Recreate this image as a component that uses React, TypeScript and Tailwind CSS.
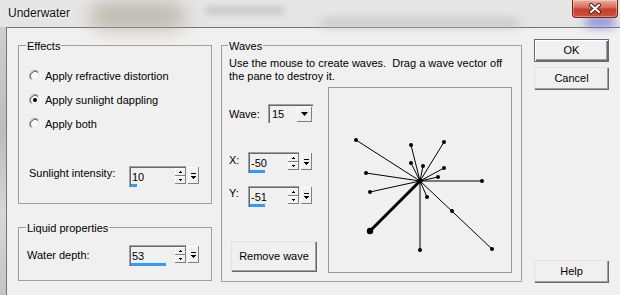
import React from "react";

const FONT = "font-['Liberation_Sans',Arial,sans-serif]";

function Radio({ checked, label }: { checked?: boolean; label: string }) {
  return (
    <div className="flex h-[24px] items-center gap-[4px]">
      <svg width="12" height="12" viewBox="0 0 12 12" className="shrink-0">
        <circle cx="6" cy="6" r="4" fill="#f7f7f7" />
        <path d="M2.11 9.89 A5.5 5.5 0 0 1 9.89 2.11" fill="none" stroke="#a0a0a0" strokeWidth="1" />
        <path d="M2.82 9.18 A4.5 4.5 0 0 1 9.18 2.82" fill="none" stroke="#696969" strokeWidth="1" />
        <path d="M9.89 2.11 A5.5 5.5 0 0 1 2.11 9.89" fill="none" stroke="#ffffff" strokeWidth="1" />
        <path d="M9.18 2.82 A4.5 4.5 0 0 1 2.82 9.18" fill="none" stroke="#e3e3e3" strokeWidth="1" />
        {checked && <circle cx="6" cy="6" r="2" fill="#000" />}
      </svg>
      <span className="text-[11px] leading-[14px] text-black whitespace-nowrap">{label}</span>
    </div>
  );
}

function SmallBtn({ children, cls }: { children: React.ReactNode; cls: string }) {
  return (
    <div
      className={`flex items-center justify-center bg-[#f0f0f0] shadow-[inset_-1px_-1px_0_#808080,inset_1px_1px_0_#ffffff] ${cls}`}
    >
      {children}
    </div>
  );
}

function UpTri() {
  return (
    <svg width="3" height="2" viewBox="0 0 3 2">
      <rect x="1" y="0" width="1" height="1" fill="#000" />
      <rect x="0" y="1" width="3" height="1" fill="#000" />
    </svg>
  );
}
function DownTri() {
  return (
    <svg width="3" height="2" viewBox="0 0 3 2">
      <rect x="0" y="0" width="3" height="1" fill="#000" />
      <rect x="1" y="1" width="1" height="1" fill="#000" />
    </svg>
  );
}
function BarDown() {
  return (
    <svg width="5" height="6" viewBox="0 0 5 6">
      <rect x="0" y="0" width="5" height="1" fill="#000" />
      <rect x="0" y="3" width="5" height="1" fill="#000" />
      <rect x="1" y="4" width="3" height="1" fill="#000" />
      <rect x="2" y="5" width="1" height="1" fill="#000" />
    </svg>
  );
}

function SpinEdit({ value, wCls, barCls }: { value: string; wCls: string; barCls: string }) {
  return (
    <div className="flex items-start">
      <div
        className={`relative flex h-[21px] items-start border-l border-t border-[#a0a0a0] shadow-[inset_1px_1px_0_#696969] ${wCls}`}
      >
        <span className="flex-1 pl-[2px] pt-[4px] text-[11px] leading-[13px] text-black">{value}</span>
        <div className="mt-[1px] flex flex-col">
          <SmallBtn cls="w-[11px] h-[8px]">
            <UpTri />
          </SmallBtn>
          <SmallBtn cls="w-[11px] h-[8px]">
            <DownTri />
          </SmallBtn>
        </div>
        <div className={`absolute bottom-[0px] left-[1px] h-[3px] bg-[#3399ff] ${barCls}`} />
      </div>
      <SmallBtn cls="ml-[2px] mt-[1px] w-[11px] h-[17px]">
        <BarDown />
      </SmallBtn>
    </div>
  );
}

function Button({ label, def, cls }: { label: string; def?: boolean; cls: string }) {
  return (
    <div
      className={`flex items-center justify-center bg-[#f0f0f0] text-[11px] leading-[13px] text-black ${
        def
          ? "border border-[#696969] shadow-[inset_1px_1px_0_#ffffff,inset_-1px_-1px_0_#696969,inset_-2px_-2px_0_#a0a0a0]"
          : "shadow-[inset_1px_1px_0_#e3e3e3,inset_-1px_-1px_0_#696969,inset_-2px_-2px_0_#a0a0a0]"
      } ${cls}`}
    >
      {label}
    </div>
  );
}

function Group({
  title,
  cls,
  legendCls,
  children,
}: {
  title: string;
  cls: string;
  legendCls: string;
  children: React.ReactNode;
}) {
  return (
    <div className={`relative border border-[#a0a0a0] ${cls}`}>
      <span
        className={`absolute top-[-7px] bg-[#f0f0f0] px-[1px] text-[11px] leading-[14px] text-black whitespace-nowrap ${legendCls}`}
      >
        {title}
      </span>
      {children}
    </div>
  );
}

const center = [420, 181];
const thin: [number, number][] = [
  [356, 140],
  [411, 145],
  [444, 142],
  [411, 163],
  [423, 166],
  [444, 168],
  [366, 173],
  [438, 177],
  [482, 181],
  [370, 192],
  [427, 197],
  [492, 249],
  [420, 250],
];

function WavePane() {
  return (
    <div className="h-[186px] w-[184px] border border-[#9a9a9a] bg-[#f0f0f0]">
      <svg width="182" height="184" viewBox="329 88 182 184">
        {thin.map(([x, y], i) => (
          <line key={i} x1={center[0]} y1={center[1]} x2={x} y2={y} stroke="#000" strokeWidth="1" />
        ))}
        <line x1={center[0]} y1={center[1]} x2={370} y2={231} stroke="#000" strokeWidth="3" />
        {thin.map(([x, y], i) => (
          <circle key={"d" + i} cx={x} cy={y} r="2" fill="#000" />
        ))}
        <circle cx={452} cy={211} r="2" fill="#000" />
        <circle cx={370} cy={231} r="3.2" fill="#000" />
        <circle cx={center[0]} cy={center[1]} r="2.5" fill="#000" />
      </svg>
    </div>
  );
}

export default function App() {
  return (
    <div
      className={`relative h-[295px] w-[620px] overflow-hidden bg-[linear-gradient(180deg,#e6e6e6,#d4d4d4)] ${FONT}`}
    >
      {/* title bar */}
      <div className="relative flex h-[27px] items-start justify-between">
        <div className="pointer-events-none absolute left-[90px] top-[2px] h-[28px] w-[95px] rounded-full bg-[#a8a090] opacity-60 blur-[9px]" />
        <div className="pointer-events-none absolute left-[205px] top-[6px] h-[9px] w-[80px] rounded-full bg-[#c4c4c4] opacity-80 blur-[3px]" />
        <div className="pointer-events-none absolute left-[320px] top-[18px] h-[10px] w-[200px] rounded-full bg-[#b8b8b8] opacity-60 blur-[5px]" />
        <div className="pointer-events-none absolute left-[585px] top-[16px] h-[12px] w-[30px] rounded-full bg-[#7f7fd6] opacity-80 blur-[4px]" />
        <span className="relative pl-[8px] pt-[6px] text-[12px] leading-[14px] text-[#141414] [text-shadow:0_0_6px_#ffffff]">
          Underwater
        </span>
        <div className="relative mr-[2px] flex h-[18px] w-[46px] items-center justify-center rounded-b-[4px] border border-t-0 border-[#6e2418] bg-[linear-gradient(180deg,#eab0a2_0%,#d86a55_45%,#c3402a_55%,#d0523a_100%)] shadow-[inset_0_0_0_1px_rgba(255,255,255,0.35)]">
          <svg width="14" height="11" viewBox="0 0 14 11">
            <path d="M3 2 L11 9 M11 2 L3 9" stroke="#4a1a12" strokeWidth="4" strokeLinecap="round" />
            <path d="M3 2 L11 9 M11 2 L3 9" stroke="#ffffff" strokeWidth="2.2" strokeLinecap="round" />
          </svg>
        </div>
      </div>

      {/* body */}
      <div className="flex h-[268px]">
        <div className="w-[6px] bg-[linear-gradient(180deg,#cfcfcf,#bcbcbc_40%,#d8d8d8_70%,#c4c4c4)]" />
        <div className="flex flex-1 items-start border-l border-t border-[#747474] bg-[#f0f0f0] pl-[11px] pt-[11px]">
          {/* left column */}
          <div className="mt-[6px] flex w-[194px] flex-col">
            <Group title="Effects" cls="h-[159px]" legendCls="left-[7px]">
              <div className="flex flex-col pl-[10px] pt-[18px]">
                <Radio label="Apply refractive distortion" />
                <Radio label="Apply sunlight dappling" checked />
                <Radio label="Apply both" />
                <div className="mt-[30px] flex items-start">
                  <span className="w-[100px] pt-[0px] text-[11px] leading-[14px] text-black">Sunlight intensity:</span>
                  <SpinEdit value="10" wCls="w-[57px]" barCls="w-[6px]" />
                </div>
              </div>
            </Group>
            <Group title="Liquid properties" cls="mt-[23px] h-[54px]" legendCls="left-[7px]">
              <div className="flex items-start pl-[8px] pt-[17px]">
                <span className="mt-[3px] w-[102px] text-[11px] leading-[14px] text-black">Water depth:</span>
                <SpinEdit value="53" wCls="w-[57px]" barCls="w-[35px]" />
              </div>
            </Group>
          </div>

          {/* waves */}
          <Group title="Waves" cls="ml-[9px] mt-[6px] h-[237px] w-[301px]" legendCls="left-[6px]">
            <div className="flex flex-col pl-[7px] pt-[11px]">
              <p className="text-[11px] leading-[13px] text-black whitespace-nowrap">
                {"Use the mouse to create waves.\u00a0 Drag a wave vector off"}
                <br />
                the pane to destroy it.
              </p>
              <div className="mt-[4px] flex">
                <div className="flex w-[99px] flex-col">
                  <div className="mt-[17px] flex items-center">
                    <span className="w-[39px] text-[11px] leading-[14px] text-black">Wave:</span>
                    <div className="flex h-[19px] w-[45px] items-center border-l border-t border-[#a0a0a0] shadow-[inset_1px_1px_0_#696969]">
                      <span className="flex-1 pl-[3px] text-[11px] leading-[13px] text-black">15</span>
                      <SmallBtn cls="mr-[1px] h-[15px] w-[15px]">
                        <svg width="7" height="4" viewBox="0 0 7 4">
                          <path d="M0 0 H7 L3.5 4 Z" fill="#000" />
                        </svg>
                      </SmallBtn>
                    </div>
                  </div>
                  <div className="mt-[29px] flex items-start">
                    <span className="mt-[1px] w-[19px] text-[11px] leading-[14px] text-black">X:</span>
                    <SpinEdit value="-50" wCls="w-[51px]" barCls="w-[15px]" />
                  </div>
                  <div className="mt-[13px] flex items-start">
                    <span className="w-[19px] text-[11px] leading-[14px] text-black">Y:</span>
                    <SpinEdit value="-51" wCls="w-[51px]" barCls="w-[15px]" />
                  </div>
                  <Button label="Remove wave" cls="ml-[2px] mt-[34px] h-[31px] w-[86px]" />
                </div>
                <WavePane />
              </div>
            </div>
          </Group>

          {/* buttons */}
          <div className="ml-[12px] flex w-[75px] flex-col">
            <Button label="OK" def cls="h-[23px]" />
            <Button label="Cancel" cls="mt-[5px] h-[23px]" />
            <Button label="Help" cls="mt-[170px] h-[23px]" />
          </div>
        </div>
      </div>
    </div>
  );
}
